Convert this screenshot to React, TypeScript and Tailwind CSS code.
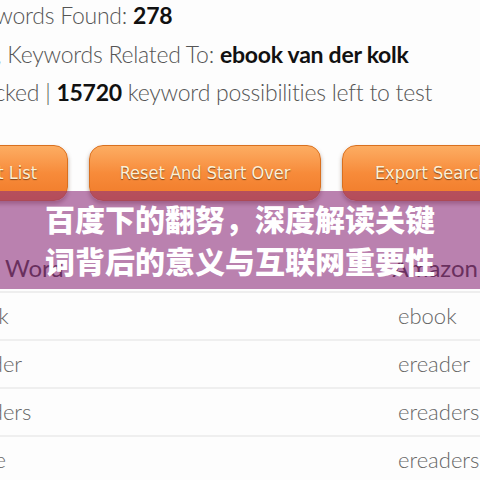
import React from "react";

const rows = [
  { left: "ebook", right: "ebook" },
  { left: "ereader", right: "ereader" },
  { left: "ereaders", right: "ereaders" },
  { left: "kindle", right: "ereaders" },
];

function OrangeButton({ label, className }: { label: string; className?: string }) {
  return (
    <div
      className={`h-[56px] w-[232px] shrink-0 rounded-[14px] border border-[#d9701f] bg-gradient-to-b from-[#fcad62] via-[#f78b3a] to-[#f07a28] shadow-[0_3px_4px_rgba(90,60,40,0.45)] flex items-center ${className ?? "justify-center"}`}
    >
      <span className="font-['DejaVu_Sans_Condensed','DejaVu_Sans',sans-serif] text-[18px] text-[#fdf0d6] [text-shadow:0_1px_1px_rgba(80,40,10,0.7)] whitespace-nowrap">
        {label}
      </span>
    </div>
  );
}

export default function App() {
  return (
    <div className="relative w-[480px] h-[480px] overflow-hidden bg-[#fdfdfd] font-['Lato',sans-serif]">
      {/* Stats lines */}
      <div className="mt-[-4px] text-[23px] tracking-[-0.25px] leading-[38.5px] text-[#555] font-light whitespace-nowrap">
        <div className="ml-[-41px]">
          Keywords Found: <span className="font-bold text-[#111]">278</span>
        </div>
        <div className="ml-[-15px]">
          g, Keywords Related To: <span className="font-bold text-[#111]">ebook van der kolk</span>
        </div>
        <div className="ml-[-45px]">
          Checked | <span className="font-bold text-[#111]">15720</span> keyword possibilities left to test
        </div>
      </div>

      {/* Buttons */}
      <div className="mt-[33px] flex gap-[21px] ml-[-164px]">
        <OrangeButton label="Print List" className="justify-end pr-[30px]" />
        <OrangeButton label="Reset And Start Over" />
        <OrangeButton label="Export Search Terms" />
      </div>

      {/* Table */}
      <div className="mt-[44px] text-[22px] font-light text-[#666]">
        <div className="h-[48px] flex items-center justify-between border-b-2 border-[#eee] text-[24px] text-[#333] font-normal">
          <span className="pl-[5px]">Word</span>
          <span className="pr-[2px]">Amazon</span>
        </div>
        {rows.map((r, i) => (
          <div key={i} className="h-[48px] flex items-center border-b-2 border-[#efefef] whitespace-nowrap">
            <span className="ml-[-50px] w-[448px] shrink-0">{r.left}</span>
            <span className="shrink-0">{r.right}</span>
          </div>
        ))}
      </div>

      {/* Title overlay */}
      <div className="absolute left-0 right-0 top-[191px] h-[98px] bg-[rgba(142,47,123,0.6)] flex flex-col items-center justify-center">
        <div className="mt-[-3px] font-['Noto_Sans_CJK_SC',sans-serif] font-black text-white text-[30px] leading-[42px] text-center">
          <div>百度下的翻努，深度解读关键</div>
          <div>词背后的意义与互联网重要性</div>
        </div>
      </div>
    </div>
  );
}
